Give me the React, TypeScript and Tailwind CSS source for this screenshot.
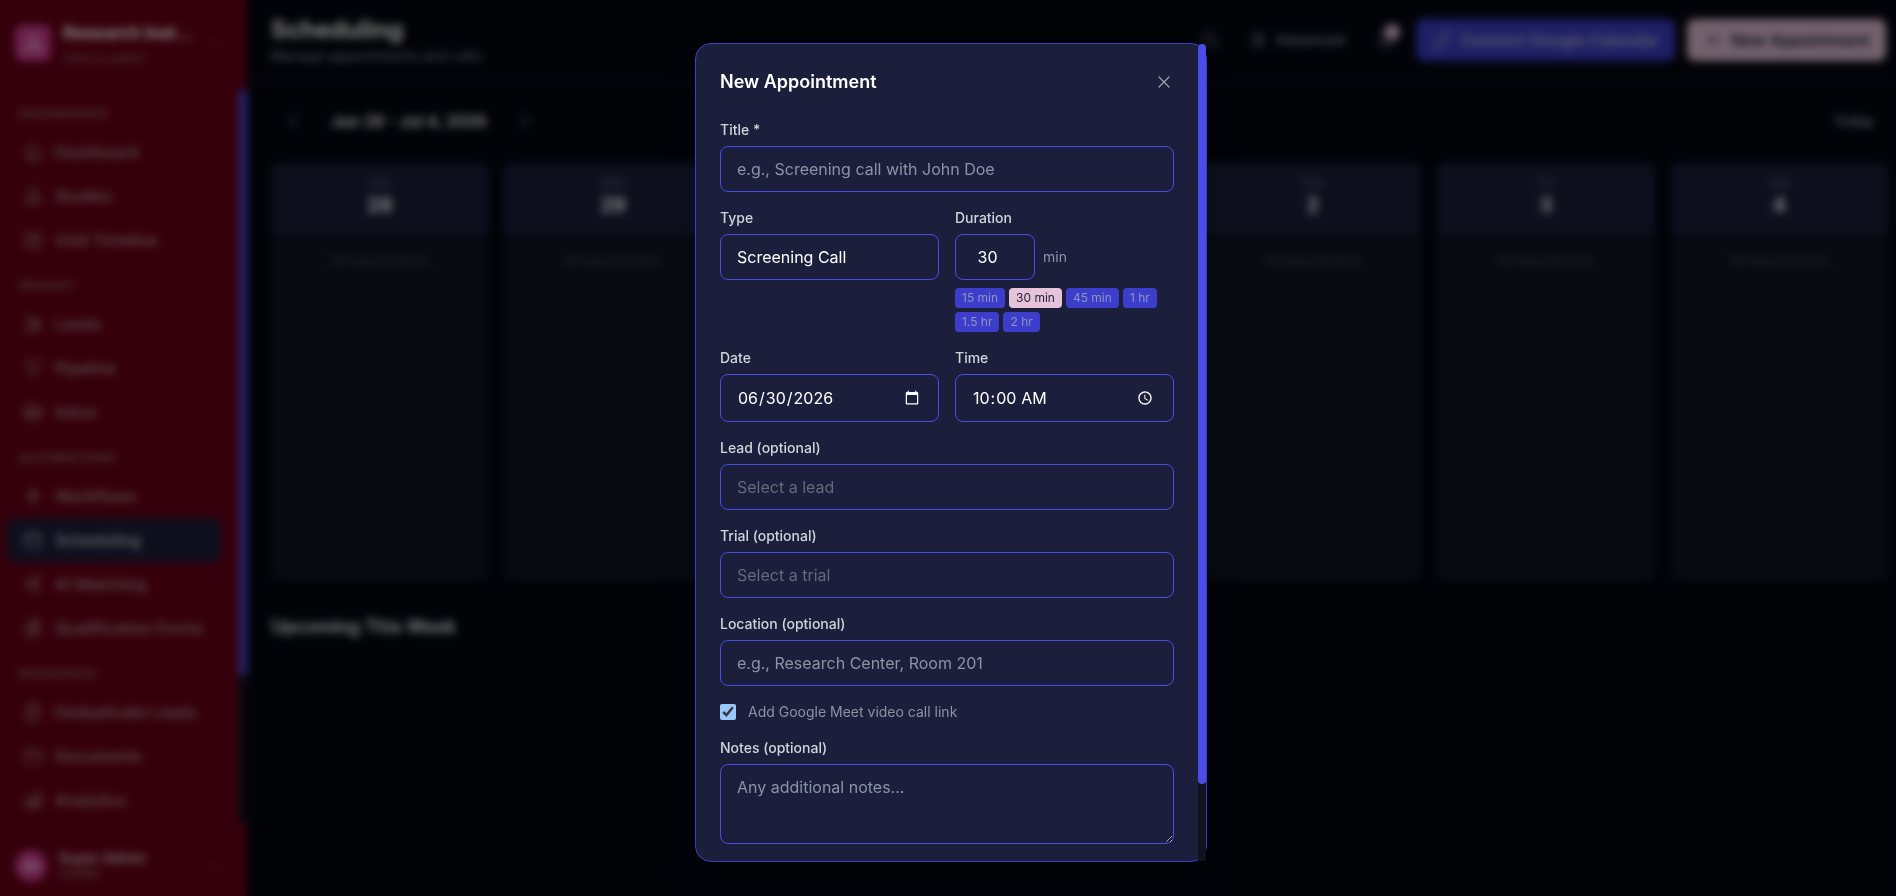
import { useState } from "react";
import type { ComponentType, ReactNode } from "react";
import {
  HiOutlineAdjustmentsHorizontal,
  HiOutlineBeaker,
  HiOutlineBell,
  HiOutlineBolt,
  HiOutlineCalendar,
  HiOutlineCalendarDays,
  HiOutlineChartBar,
  HiOutlineChevronDown,
  HiOutlineChevronLeft,
  HiOutlineChevronRight,
  HiOutlineClipboardDocumentList,
  HiOutlineDocumentDuplicate,
  HiOutlineFolder,
  HiOutlineFunnel,
  HiOutlineHome,
  HiOutlineInboxStack,
  HiOutlineLink,
  HiOutlineMagnifyingGlass,
  HiOutlinePlus,
  HiOutlineSparkles,
  HiOutlineUsers,
  HiOutlineXMark,
} from "react-icons/hi2";

type NavItem = { name: string; icon: ComponentType<{ className?: string }> };

const sections: { title: string; items: NavItem[] }[] = [
  {
    title: "Dashboards",
    items: [
      { name: "Dashboard", icon: HiOutlineHome },
      { name: "Studies", icon: HiOutlineBeaker },
      { name: "Visit Timeline", icon: HiOutlineCalendarDays },
    ],
  },
  {
    title: "Recruit",
    items: [
      { name: "Leads", icon: HiOutlineUsers },
      { name: "Pipeline", icon: HiOutlineFunnel },
      { name: "Inbox", icon: HiOutlineInboxStack },
    ],
  },
  {
    title: "Automations",
    items: [
      { name: "Workflows", icon: HiOutlineBolt },
      { name: "Scheduling", icon: HiOutlineCalendar },
      { name: "AI Matching", icon: HiOutlineSparkles },
      { name: "Qualification Forms", icon: HiOutlineClipboardDocumentList },
    ],
  },
  {
    title: "Resources",
    items: [
      { name: "Deduplicate Leads", icon: HiOutlineDocumentDuplicate },
      { name: "Documents", icon: HiOutlineFolder },
      { name: "Analytics", icon: HiOutlineChartBar },
    ],
  },
];

const days = [
  ["Sun", "28"],
  ["Mon", "29"],
  ["Tue", "30"],
  ["Wed", "1"],
  ["Thu", "2"],
  ["Fri", "3"],
  ["Sat", "4"],
];

const durations = [
  { label: "15 min", value: 15 },
  { label: "30 min", value: 30 },
  { label: "45 min", value: 45 },
  { label: "1 hr", value: 60 },
  { label: "1.5 hr", value: 90 },
  { label: "2 hr", value: 120 },
];

// native bars are hidden, ScrollTrack draws the coloured one
const scrollArea = "min-w-0 flex-1 overflow-y-auto [scrollbar-width:none]";

const boxClass =
  "block w-full rounded-lg border border-[#4b4de8] bg-[#1b1f3b] px-4 py-2.5 text-base placeholder:text-[#8b93a7] focus:outline-none";
const inputClass = `${boxClass} text-white`;
const emptySelectClass = `${boxClass} appearance-none text-[#646a7c]`;

function ScrollTrack({ thumb }: { thumb: number }) {
  return (
    <div aria-hidden className="w-2 shrink-0 bg-[#0f1220]">
      <div className="rounded-full bg-[#4b4de8]" style={{ height: `${thumb}%` }} />
    </div>
  );
}

function Field({ id, label, children }: { id: string; label: string; children: ReactNode }) {
  return (
    <div>
      <label htmlFor={id} className="mb-1.5 block text-sm font-medium text-[#d1d5db]">
        {label}
      </label>
      {children}
    </div>
  );
}

function Sidebar() {
  return (
    <aside className="flex w-[247px] shrink-0 flex-col bg-[#6b0016]">
      <button className="flex h-[90px] shrink-0 items-center gap-3 border-b border-[#70081f] px-[15px] pb-1 text-left">
        <span className="flex size-9 shrink-0 items-center justify-center rounded-lg bg-[#d63f97] text-white">
          <HiOutlineBeaker className="size-5" />
        </span>
        <span className="w-[132px]">
          <span className="mb-1 block text-[17px] leading-7 font-bold whitespace-nowrap text-white">Research Inst...</span>
          <span className="block text-xs text-[#a08088]">Click to switch</span>
        </span>
        <HiOutlineChevronDown className="size-4 shrink-0 text-[#a08088]" />
      </button>

      <div className="flex min-h-0 flex-1">
        <nav className={`pt-4 pr-[18px] pl-[7px] ${scrollArea}`}>
          {sections.map((section) => (
            <div key={section.title} className="mb-4">
              <h2 className="mb-2 px-3 text-xs font-semibold tracking-wider text-[#94747c] uppercase">
                {section.title}
              </h2>
              {section.items.map(({ name, icon: Icon }) => (
                <a
                  key={name}
                  href="#"
                  className={`flex h-11 items-center gap-3 rounded-lg px-4 font-medium ${
                    name === "Scheduling" ? "bg-[#1b1f3b] text-[#d6d7de]" : "text-[#b59ba2]"
                  }`}
                >
                  <Icon className="size-5 shrink-0" />
                  <span className="whitespace-nowrap">{name}</span>
                </a>
              ))}
            </div>
          ))}
        </nav>
        <ScrollTrack thumb={80} />
      </div>

      <button className="flex h-[74px] shrink-0 items-center gap-3 border-t border-[#70081f] px-[15px] pt-3 text-left">
        <span className="flex size-8 shrink-0 items-center justify-center rounded-full bg-[#d63f97] text-xs font-semibold text-white">
          SA
        </span>
        <span className="w-[136px]">
          <span className="block text-sm leading-4 font-semibold text-[#d9c9ce]">Super Admin</span>
          <span className="block text-xs text-[#a08088]">ADMIN</span>
        </span>
        <HiOutlineChevronDown className="size-4 shrink-0 text-[#a08088]" />
      </button>
    </aside>
  );
}

function Header() {
  return (
    <header className="flex h-[83px] shrink-0 items-center justify-between border-b-2 border-[#14143d] pr-2.5 pb-0.5 pl-6">
      <div>
        <h1 className="text-2xl font-bold text-white">Scheduling</h1>
        <p className="text-sm text-[#8b93a7]">Manage appointments and calls</p>
      </div>
      <div className="flex items-center gap-3 text-[#9aa1b3]">
        <button aria-label="Search" className="p-1">
          <HiOutlineMagnifyingGlass className="size-5" />
        </button>
        <button className="flex items-center gap-2 px-3 text-sm font-medium">
          <HiOutlineAdjustmentsHorizontal className="size-5" />
          Advanced
        </button>
        <button aria-label="Notifications" className="relative p-2">
          <HiOutlineBell className="size-5" />
          <span className="absolute top-0.5 right-1 size-4 rounded-full bg-[#e6c3d8]" />
        </button>
        <button className="flex h-[42px] items-center gap-2 rounded-lg bg-[#3d3dcc] px-4 font-semibold text-[#b9bdd6]">
          <HiOutlineLink className="size-5" />
          Connect Google Calendar
        </button>
        <button className="flex h-[42px] items-center gap-2 rounded-lg bg-[#e6c3d8] px-4 font-semibold text-[#1b1f3b]">
          <HiOutlinePlus className="size-5" />
          New Appointment
        </button>
      </div>
    </header>
  );
}

function Calendar() {
  return (
    <main className="flex-1 pt-4 pr-2 pl-6">
      <div className="flex h-11 items-center justify-between">
        <div className="flex items-center gap-4 text-white">
          <button aria-label="Previous week" className="p-3 text-[#8b93a7]">
            <HiOutlineChevronLeft className="size-5" />
          </button>
          <h2 className="text-base font-semibold">Jun 28 - Jul 4, 2026</h2>
          <button aria-label="Next week" className="p-3 text-[#8b93a7]">
            <HiOutlineChevronRight className="size-5" />
          </button>
        </div>
        <button className="px-3.5 text-sm font-medium text-[#a9aebd]">Today</button>
      </div>

      <div className="mt-5 grid grid-cols-7 gap-4">
        {days.map(([name, date]) => (
          <section key={name} className="min-h-[418px] overflow-hidden rounded-lg bg-[#0f1522]">
            <div className="border-b-2 border-[#1d1d50] bg-[#1b1f3b] py-3 text-center">
              <div className="text-xs text-[#6b7280]">{name}</div>
              <div className="text-xl font-bold text-white">{date}</div>
            </div>
            <p className="pt-5 text-center text-xs text-[#4b5563]">No appointments</p>
          </section>
        ))}
      </div>

      <h2 className="mt-8 text-lg font-semibold text-white">Upcoming This Week</h2>
    </main>
  );
}

function AppointmentDialog() {
  const [duration, setDuration] = useState(30);
  const [meet, setMeet] = useState(true);

  return (
    <div className="fixed inset-0 flex justify-center bg-black/50 pt-[43px] pb-[34px] pl-1.5 backdrop-blur-xs">
      <div
        role="dialog"
        aria-labelledby="dialog-title"
        className="flex w-full max-w-lg scheme-dark rounded-2xl border border-[#3d3dcc] bg-[#1b1f3b] shadow-2xl"
      >
        <div className={`rounded-l-2xl p-6 ${scrollArea}`}>
          <div className="mb-6 flex items-center justify-between">
            <h2 id="dialog-title" className="text-lg font-semibold text-white">
              New Appointment
            </h2>
            <button aria-label="Close" className="text-[#9ca3af]">
              <HiOutlineXMark className="size-5" />
            </button>
          </div>

          <form className="space-y-4" onSubmit={(e) => e.preventDefault()}>
            <Field id="title" label="Title *">
              <input id="title" className={inputClass} placeholder="e.g., Screening call with John Doe" />
            </Field>

            <div className="grid grid-cols-2 gap-4">
              <Field id="type" label="Type">
                <select id="type" className={`appearance-none ${inputClass}`}>
                  <option>Screening Call</option>
                </select>
              </Field>
              <Field id="duration" label="Duration">
                <div className="flex items-center gap-2">
                  <div className="w-20">
                    <input
                      id="duration"
                      type="number"
                      value={duration}
                      onChange={(e) => setDuration(Number(e.target.value))}
                      className={`text-center ${inputClass}`}
                    />
                  </div>
                  <span className="text-sm text-[#8b93a7]">min</span>
                </div>
                <div className="mt-2 flex flex-wrap gap-1">
                  {durations.map((d) => (
                    <button
                      key={d.value}
                      type="button"
                      onClick={() => setDuration(d.value)}
                      className={`rounded px-[7px] py-0.5 text-xs ${
                        d.value === duration ? "bg-[#e6c3d8] text-[#1b1f3b]" : "bg-[#3d3dcc] text-[#8f95bd]"
                      }`}
                    >
                      {d.label}
                    </button>
                  ))}
                </div>
              </Field>
            </div>

            <div className="grid grid-cols-2 gap-4">
              <Field id="date" label="Date">
                <input id="date" type="date" defaultValue="2026-06-30" className={`h-12 ${inputClass}`} />
              </Field>
              <Field id="time" label="Time">
                <input id="time" type="time" defaultValue="10:00" className={`h-12 ${inputClass}`} />
              </Field>
            </div>

            <Field id="lead" label="Lead (optional)">
              <select id="lead" className={emptySelectClass}>
                <option>Select a lead</option>
              </select>
            </Field>
            <Field id="trial" label="Trial (optional)">
              <select id="trial" className={emptySelectClass}>
                <option>Select a trial</option>
              </select>
            </Field>
            <Field id="location" label="Location (optional)">
              <input id="location" className={inputClass} placeholder="e.g., Research Center, Room 201" />
            </Field>

            <label className="flex items-center gap-3 text-sm text-[#8b93a7]">
              <input type="checkbox" checked={meet} onChange={(e) => setMeet(e.target.checked)} className="size-4" />
              Add Google Meet video call link
            </label>

            <Field id="notes" label="Notes (optional)">
              <textarea id="notes" className={`h-20 ${inputClass}`} placeholder="Any additional notes..." />
            </Field>

            <div className="flex gap-3 pt-4">
              <button type="button" className="h-[46px] flex-1 rounded-lg border border-[#4b4de8] text-white">
                Cancel
              </button>
              <button type="submit" className="h-[46px] flex-1 rounded-lg bg-[#e6c3d8] font-medium text-[#1b1f3b]">
                Create
              </button>
            </div>
          </form>
        </div>
        <ScrollTrack thumb={90.6} />
      </div>
    </div>
  );
}

export default function App() {
  return (
    <div className="flex h-screen overflow-hidden bg-[#04060f] font-['Inter',sans-serif]">
      <Sidebar />
      <div className="flex min-w-0 flex-1 flex-col">
        <Header />
        <Calendar />
      </div>
      <AppointmentDialog />
    </div>
  );
}
